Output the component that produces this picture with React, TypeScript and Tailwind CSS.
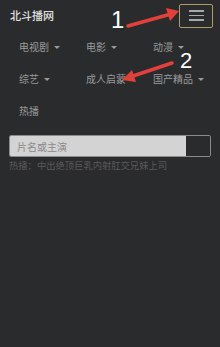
import React from "react";

const Caret = () => (
  <span className="ml-[5px] inline-block h-0 w-0 border-x-[3px] border-t-[3px] border-x-transparent border-t-[#9a9a9a] align-middle" />
);

const navItems = [
  { label: "电视剧", caret: true },
  { label: "电影", caret: true },
  { label: "动漫", caret: true },
  { label: "综艺", caret: true },
  { label: "成人启蒙", caret: false },
  { label: "国产精品", caret: true },
  { label: "热播", caret: false },
];

export default function App() {
  return (
    <div
      className="relative h-[347px] w-[220px] overflow-hidden bg-[#2a2b2d]"
      style={{ fontFamily: '"Noto Sans CJK SC", "Noto Sans", sans-serif' }}
    >
      {/* header */}
      <div className="flex h-[30px] items-center justify-between pl-[10px] pr-[7px] pt-[1px]">
        <span className="text-[11px] font-medium leading-none text-[#e2e2e2]">北斗播网</span>
        <button className="flex h-[24px] w-[34px] flex-col items-center justify-center gap-[3px] rounded-[2px] border border-[#b09c6a]">
          <span className="block h-[1.5px] w-[15px] bg-[#a8a8a8]" />
          <span className="block h-[1.5px] w-[15px] bg-[#a8a8a8]" />
          <span className="block h-[1.5px] w-[15px] bg-[#a8a8a8]" />
        </button>
      </div>

      {/* nav */}
      <div className="mt-[1px] grid grid-cols-[67px_67px_67px] pl-[19px]">
        {navItems.map((item) => (
          <div key={item.label} className="flex h-[32px] items-center text-[10px] leading-none text-[#9a9a9a]">
            {item.label}
            {item.caret && <Caret />}
          </div>
        ))}
      </div>

      {/* search */}
      <div className="mt-[8px] px-[9px]">
        <div className="flex h-[22px] overflow-hidden rounded-[2px] border border-[#8a8a8a]">
          <div className="flex flex-1 items-center bg-[#d3d3d3] pl-[7px] text-[10px] text-[#8a8a8a]">片名或主演</div>
          <div className="w-[24px] bg-[#2a2b2d]" />
        </div>
        <p className="mt-[4px] text-[9.3px] leading-none text-[#5a5a5a]">热播：中出绝顶巨乳内射肛交兄妹上司</p>
      </div>

      {/* annotations */}
      <span
        className="absolute left-[111px] top-[8px] text-[24px] leading-none text-white"
        style={{ fontFamily: '"Liberation Sans", sans-serif' }}
      >
        1
      </span>
      <span
        className="absolute left-[180px] top-[50px] text-[22px] leading-none text-white"
        style={{ fontFamily: '"Liberation Sans", sans-serif' }}
      >
        2
      </span>
      <svg className="pointer-events-none absolute left-0 top-0" width="220" height="347">
        <line x1="128" y1="26" x2="171" y2="14" stroke="#e2403a" strokeWidth="3.5" strokeLinecap="round" />
        <polygon points="179,11 166,8 170,21" fill="#e2403a" />
        <line x1="172" y1="63" x2="130" y2="77" stroke="#e2403a" strokeWidth="3.5" strokeLinecap="round" />
        <polygon points="122,80 132,70 136,82" fill="#e2403a" />
      </svg>
    </div>
  );
}
